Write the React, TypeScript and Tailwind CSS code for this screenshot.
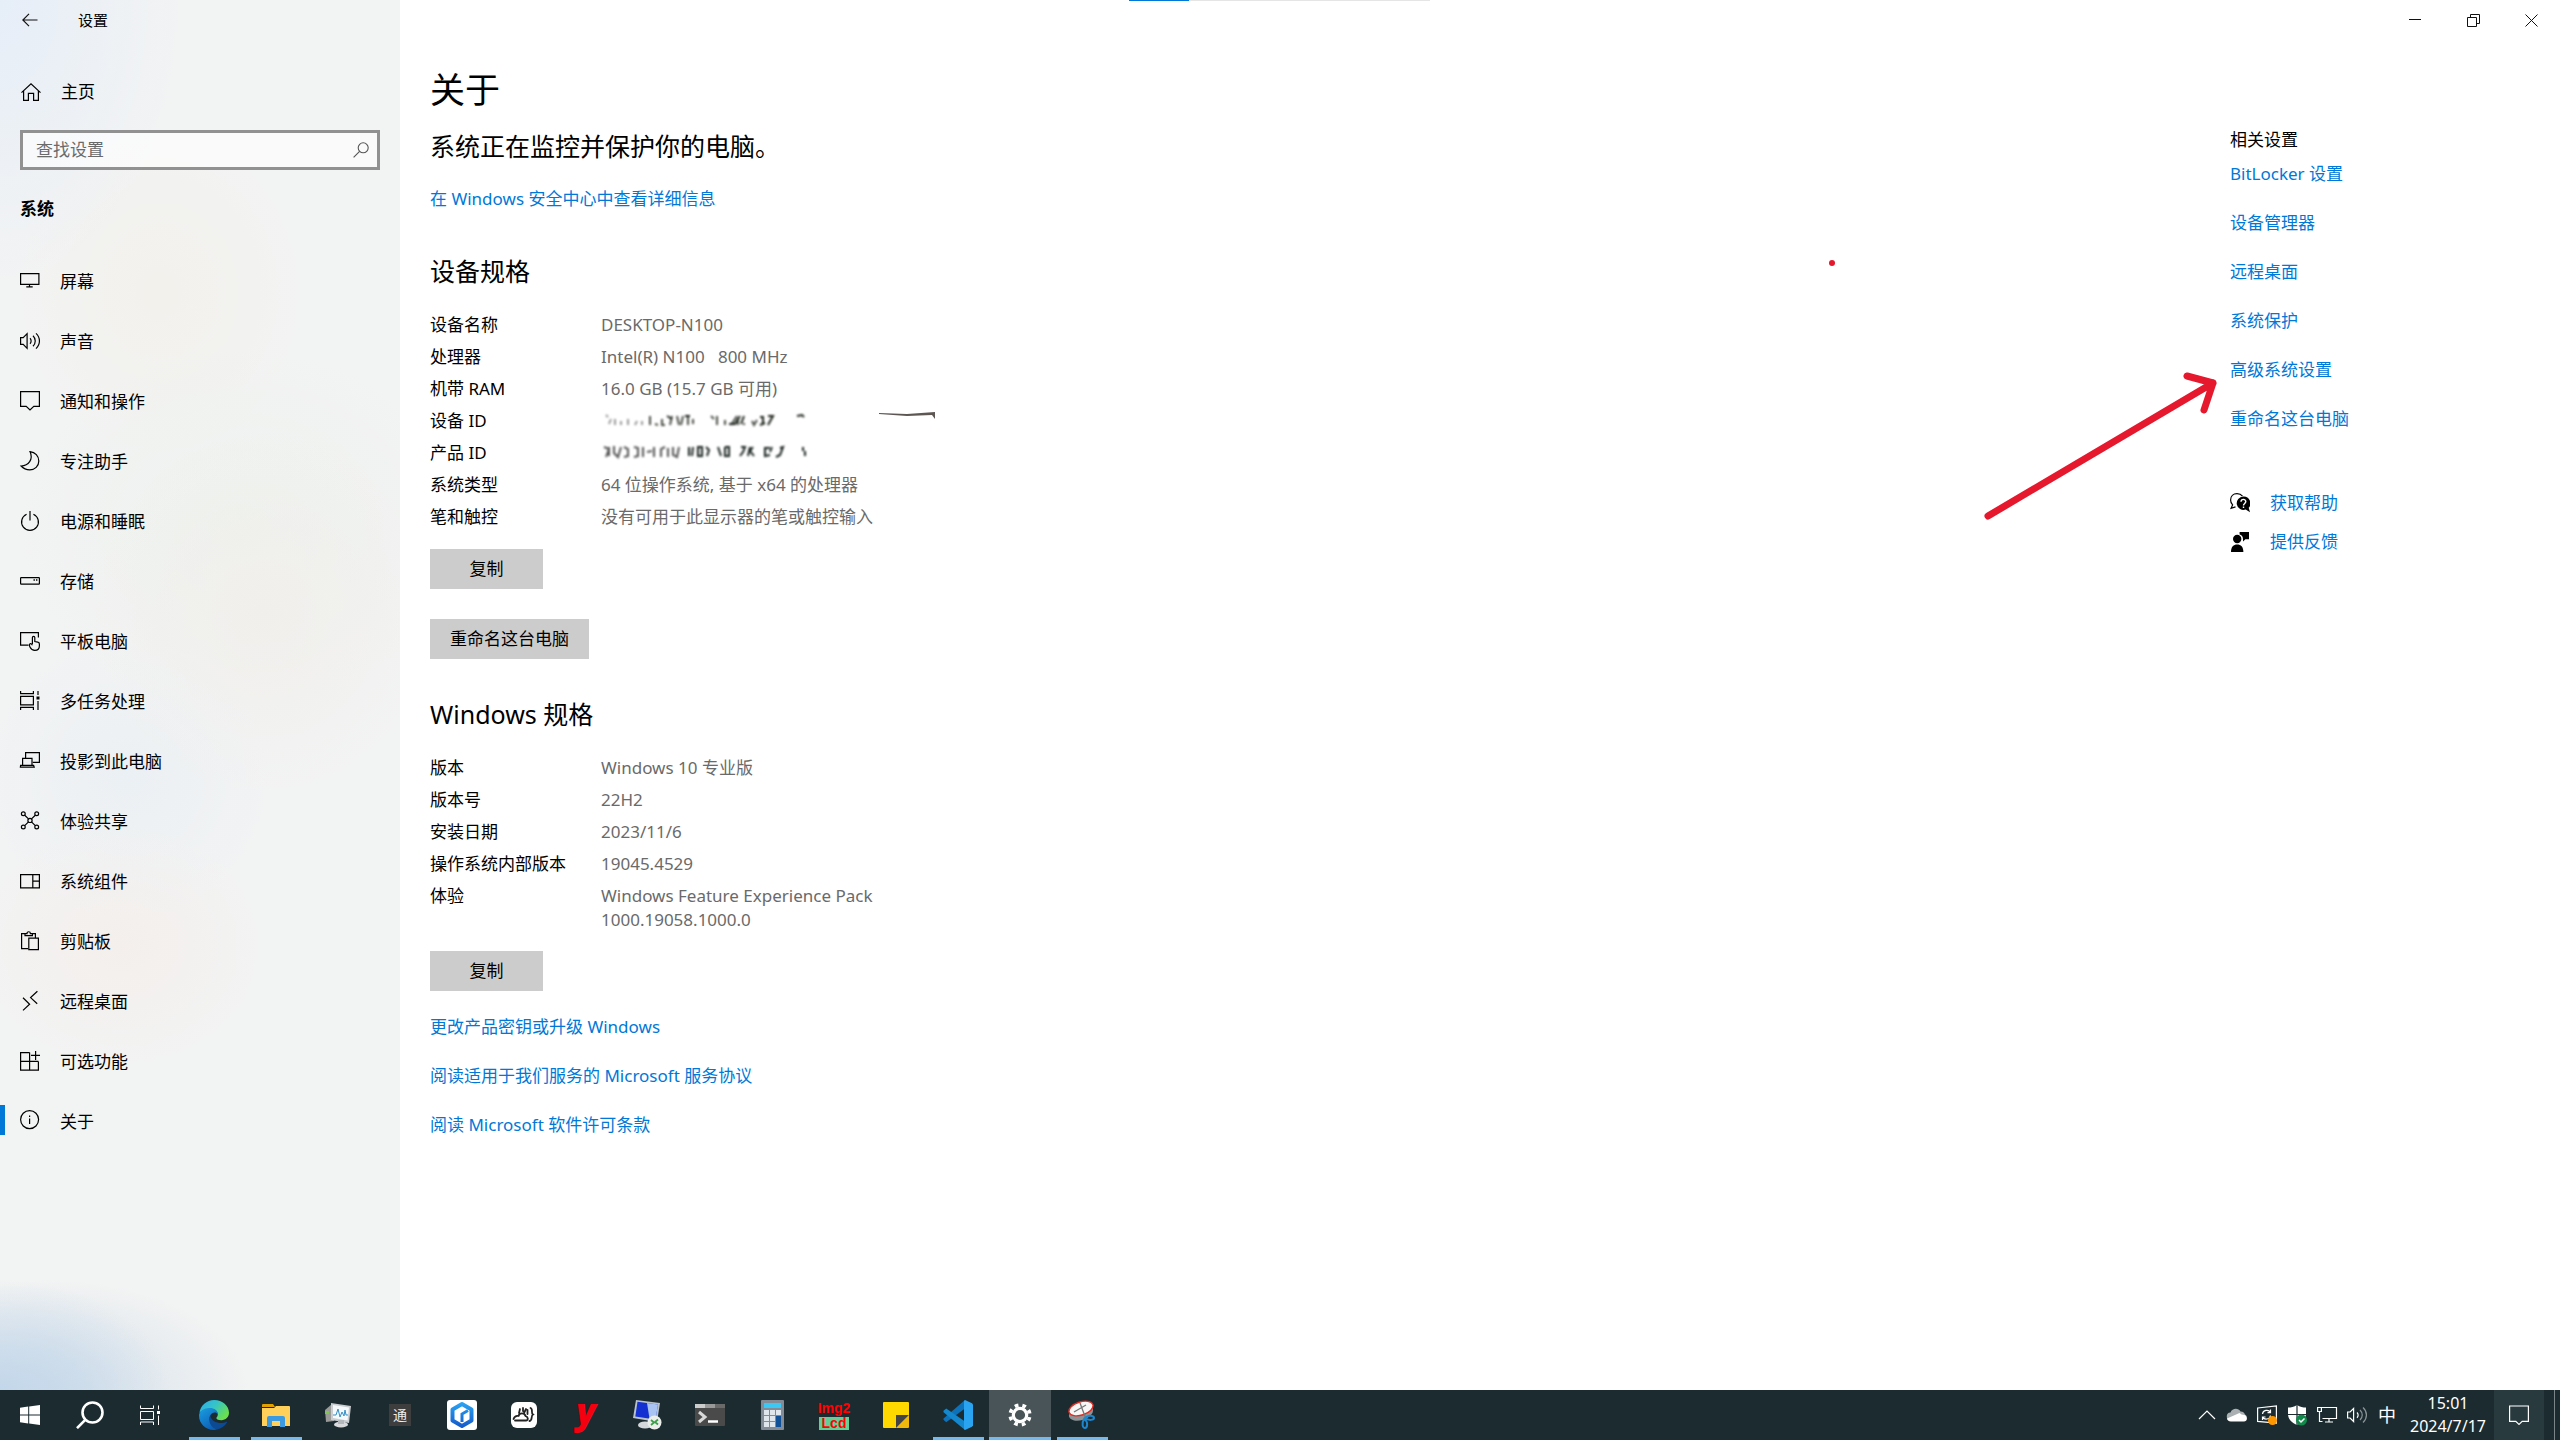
import type { ReactNode } from "react";

type IconProps = { children: ReactNode; className?: string };

function LineIcon({ children, className = "" }: IconProps) {
  return (
    <svg
      viewBox="0 0 20 20"
      fill="none"
      stroke="currentColor"
      strokeWidth="1.2"
      aria-hidden="true"
      className={`size-5 shrink-0 overflow-visible ${className}`}
    >
      {children}
    </svg>
  );
}

const navItems: { label: string; icon: ReactNode; current?: boolean }[] = [
  {
    label: "屏幕",
    icon: <path d="M.6 3.6h18.3v10.8H.6zM9.5 14.4v2.2M6.3 16.8h6.4" />,
  },
  {
    label: "声音",
    icon: (
      <path d="M.6 7.6h2.6l3.9-3.9v14.6l-3.9-3.9H.6zM10 8.2c1.5 1.4 1.5 4.2 0 5.6M13 5.8c3 2.9 3 7.5 0 10.4M16 3.4c4.6 4.3 4.6 11 0 15.2" />
    ),
  },
  {
    label: "通知和操作",
    icon: <path d="M.6 1.6h18.8v14.8h-5.6L10 20l-3.8-3.6H.6z" />,
  },
  {
    label: "专注助手",
    icon: (
      <path d="M10 1.6c5.2 .6 8.8 4.5 8.8 9.4 0 5.2-4 8.9-9 8.9-3.4 0-6.3-1.2-8.700-3.9C8.500 15.800 13.600 9.500 10 1.600z" />
    ),
  },
  {
    label: "电源和睡眠",
    icon: <path d="M10 1v9.500M6.600 4.200a8.400 8.400 0 1 0 6.800 0" />,
  },
  {
    label: "存储",
    icon: (
      <>
        <rect x=".6" y="7.600" width="18.800" height="6.600" rx=".6" />
        <path d="M13.500 10h1.400M16 10h1.400" strokeWidth="1.400" />
      </>
    ),
  },
  {
    label: "平板电脑",
    icon: (
      <>
        <path d="M18.400 7.500V2.600H.6v12.600h8" />
        <path d="M12.400 14V7.600c0-1.700 2.400-1.700 2.400 0v4l3 .6c1.100.2 1.600.8 1.600 1.800v1.700c0 2.900-2 4.700-4.600 4.700-2.400 0-3.700-1-4.700-3.100-.7-1.500-1.200-3.400.3-3.700 1-.2 1.500.8 2 1.600" />
      </>
    ),
  },
  {
    label: "多任务处理",
    icon: (
      <>
        <path d="M.6 1v2.600h12.800V1M.6 6.400h12.800v8.400H.6zM.6 20v-2.600h12.800V20M18 1v4M18 11v9" />
        <path d="M16.500 6.500h3v3h-3z" fill="currentColor" stroke="none" />
      </>
    ),
  },
  {
    label: "投影到此电脑",
    icon: (
      <path d="M5.600 8V2.600h13.800v9.800h-6.500M2.600 8.400h9.400v7H2.600zM.6 15.400h13l.6 1.800H.4z" />
    ),
  },
  {
    label: "体验共享",
    icon: (
      <>
        <circle cx="3.300" cy="3.800" r="1.900" />
        <circle cx="16.700" cy="3.800" r="1.900" />
        <circle cx="3.300" cy="17" r="1.900" />
        <circle cx="16.700" cy="17" r="1.900" />
        <circle cx="10" cy="10.400" r="2.100" />
        <path d="M4.700 5.200l3.800 3.700M15.300 5.200l-3.800 3.700M4.700 15.600l3.800-3.700M15.300 15.600l-3.800-3.700" />
      </>
    ),
  },
  {
    label: "系统组件",
    icon: <path d="M.6 4.600h18.800v13.200H.6zM12.800 4.600v13.200M12.800 11.200h6.600" />,
  },
  {
    label: "剪贴板",
    icon: (
      <path d="M8 18.600H1.600v-15H5M11.600 3.600h3.800v4M5 5.600v-2h2c0-2.500 3.400-2.500 3.400 0h2v2zM8.800 8.200h9.600v11.400H8.800z" />
    ),
  },
  {
    label: "远程桌面",
    icon: <path d="M17.400 1.200l-6.800 6.400 6.600 6.200M3 7.800l6.600 6.400L3 20.400" />,
  },
  {
    label: "可选功能",
    icon: (
      <path d="M9.600 2.600h-9v17.600h17.800v-8.800M.6 11.400h17.800M9.600 2.600v17.600M15.600 1v9M11 5.400h9" />
    ),
  },
  {
    label: "关于",
    current: true,
    icon: (
      <>
        <circle cx="9.600" cy="9.600" r="9" />
        <path d="M9.600 8.600v5.400M9.600 5.400v1.700" />
      </>
    ),
  },
];

function Smudge({ kind }: { kind: "device" | "product" }) {
  if (kind === "device") {
    return (
      <svg viewBox="0 -3 340 24" className="h-6 w-[340px]" role="img" aria-label="已隐藏的设备 ID">
        <g fill="none" strokeWidth="2" className="blur-[1px]">
          <path stroke="#999" d="M5 3l2 2M8 12l2-5M14 13v-6M20 13v-4M27 13v-6M34 13l2-4M41 13V9" />
          <path stroke="#4b4f48" d="M49 4v9M54 12l3 1M61 7v6h3M71 4l-2 9M76 4l2 9M82 4l-2 9M87 5v8M92 12V7M110 4l3 3M116 4v9M124 13v-5M130 13l6-9M137 13V6M143 13v-2M151 9l2 4 3-5" />
          <path stroke="#1f251d" d="M66 4l5 3M84 4l5 0M128 12h7M134 12l5-8M140 12l3-8M159 5l3 0v6M167 4h5l-5 9M159 13l5-2M196 4l5-1 2 2" />
        </g>
        <path d="M278 1l28 1 28-2v7l-3-4-25 1-28-2z" fill="#5d5653" />
      </svg>
    );
  }
  return (
    <svg viewBox="0 -3 340 24" className="h-6 w-[340px]" role="img" aria-label="已隐藏的产品 ID">
      <g fill="none" strokeWidth="2" className="blur-[1px]">
        <path stroke="#555" d="M3 3l5 2-3 8M8 3v9M13 2v7l4 4 3-10M23 3l4 2v7l-4 1M33 3l4 1v8l-4 1M42 3v10M46 8l5-1M53 3v10M60 13V5l4-2M67 13V4M72 3v8l4 2 2-10" />
        <path stroke="#1a2420" d="M88 3v9M92 3l-1 9M97 3v9h4V3h-5M105 3l3 3-2 6M117 3l3 9M124 3v9h4V3h-4M140 3h4l-2 5-3 4M149 3l-2 9M152 3l-3 4 4 5M164 3v9l5-1M164 4h5M171 3l-2 5M179 4l3-1-3 8-4 2M202 3v4M204 7v5" />
      </g>
    </svg>
  );
}

const deviceSpecs: [string, ReactNode][] = [
  ["设备名称", "DESKTOP-N100"],
  ["处理器", "Intel(R) N100\u00a0\u00a0 800 MHz"],
  ["机带 RAM", "16.0 GB (15.7 GB 可用)"],
  ["设备 ID", <Smudge kind="device" />],
  ["产品 ID", <Smudge kind="product" />],
  ["系统类型", "64 位操作系统, 基于 x64 的处理器"],
  ["笔和触控", "没有可用于此显示器的笔或触控输入"],
];

const windowsSpecs: [string, ReactNode][] = [
  ["版本", "Windows 10 专业版"],
  ["版本号", "22H2"],
  ["安装日期", "2023/11/6"],
  ["操作系统内部版本", "19045.4529"],
  [
    "体验",
    <>
      Windows Feature Experience Pack
      <br />
      1000.19058.1000.0
    </>,
  ],
];

function SpecTable({ rows, label }: { rows: [string, ReactNode][]; label: string }) {
  return (
    <table aria-label={label} className="mt-[22px] border-collapse text-left">
      <tbody>
        {rows.map(([name, value]) => (
          <tr key={name} className="align-top">
            <th scope="row" className="w-[171px] py-1 font-normal whitespace-nowrap">
              {name}
            </th>
            <td className="py-1 whitespace-nowrap text-[#6a6a6a]">{value}</td>
          </tr>
        ))}
      </tbody>
    </table>
  );
}

function Link({ children }: { children: ReactNode }) {
  return (
    <a href="#" className="block w-fit text-[#0078d7] hover:text-gray-500">
      {children}
    </a>
  );
}

function PushButton({ children, className = "" }: { children: ReactNode; className?: string }) {
  return (
    <button type="button" className={`block h-10 min-w-[113px] bg-[#ccc] px-5 ${className}`}>
      {children}
    </button>
  );
}

function Sidebar() {
  return (
    <aside className="w-[400px] shrink-0 bg-[#f2f3f3] bg-[radial-gradient(ellipse_170px_110px_at_0%_100%,#c3d7ea_0%,transparent_100%),radial-gradient(ellipse_200px_110px_at_12%_100%,#d3dfea_0%,transparent_100%),radial-gradient(ellipse_180px_280px_at_0%_0%,#e6eef8_0%,transparent_100%),radial-gradient(ellipse_170px_180px_at_66%_44%,#f1efec_0%,transparent_100%),radial-gradient(ellipse_220px_180px_at_60%_38%,#edf2ed_0%,transparent_100%),radial-gradient(ellipse_140px_120px_at_30%_68%,#f4efec_0%,transparent_100%),radial-gradient(ellipse_140px_140px_at_32%_56%,#ebf0f4_0%,transparent_100%),radial-gradient(ellipse_140px_160px_at_40%_21%,#f2f1ec_0%,transparent_100%)]">
      <div className="flex h-10 items-center">
        <button type="button" aria-label="返回" className="flex h-10 w-[60px] items-center justify-center">
          <svg viewBox="0 0 16 16" className="size-4" fill="none" stroke="#111" strokeWidth="1.200" aria-hidden="true">
            <path d="M15.500 8H1M7 1.800L.8 8 7 14.200" />
          </svg>
        </button>
        <span className="pl-[18px] text-[15px]">设置</span>
      </div>

      <a href="#" className="mt-[27px] flex h-[50px] items-center gap-[21px] pl-5">
        <LineIcon>
          <path d="M1.500 10.600L11 1.800l9.500 8.800M3.600 9v9.400h4.800v-7h5.200v7h4.800V9" />
        </LineIcon>
        主页
      </a>

      <div className="mx-5 mt-[13px] flex h-10 items-center border-[3px] border-[#919191] bg-white/60 pr-2 pl-[13px]">
        <input
          type="search"
          aria-label="查找设置"
          placeholder="查找设置"
          className="min-w-0 flex-1 bg-transparent outline-none placeholder:text-[#6a6a6a]"
        />
        <svg viewBox="0 0 16 16" className="size-4" fill="none" stroke="#555" strokeWidth="1.100" aria-hidden="true">
          <circle cx="10.200" cy="5.800" r="5" />
          <path d="M6.600 9.400L.6 15.400" />
        </svg>
      </div>

      <h2 className="mt-[27px] pl-5 leading-6 font-bold">系统</h2>

      <nav aria-label="系统" className="mt-[29px]">
        {navItems.map((item) => (
          <a
            key={item.label}
            href="#"
            aria-current={item.current ? "page" : undefined}
            className="relative flex h-[60px] items-center gap-5 pl-5 hover:bg-black/5"
          >
            {item.current && <span className="absolute left-0 h-[30px] w-[5px] bg-[#0078d7]" />}
            <LineIcon>{item.icon}</LineIcon>
            <span className="pt-[3px]">{item.label}</span>
          </a>
        ))}
      </nav>
    </aside>
  );
}

function WindowControls() {
  return (
    <header className="relative flex h-10 justify-end">
      <div className="absolute top-0 left-[729px] flex h-px w-[301px] bg-[#e5e5e5]">
        <span className="w-[60px] bg-[#0078d7]" />
      </div>
      <button type="button" aria-label="最小化" className="flex w-[58px] items-center justify-center">
        <svg viewBox="0 0 12 12" className="size-3" stroke="#111" fill="none" aria-hidden="true">
          <path d="M0 5.500h12" />
        </svg>
      </button>
      <button type="button" aria-label="还原" className="flex w-[58px] items-center justify-center">
        <svg viewBox="0 0 13 13" className="size-[13px]" stroke="#111" fill="none" aria-hidden="true">
          <path d="M.5 3.500h9v9h-9zM3.500 3.500v-3h9v9h-3" />
        </svg>
      </button>
      <button type="button" aria-label="关闭" className="flex w-[58px] items-center justify-center">
        <svg viewBox="0 0 13 13" className="size-[13px]" stroke="#111" fill="none" aria-hidden="true">
          <path d="M.5.5l12 12M12.500.5l-12 12" />
        </svg>
      </button>
    </header>
  );
}

function Related() {
  return (
    <aside className="relative w-[330px] shrink-0 pt-[88px]">
      <svg
        viewBox="0 0 390 264"
        className="pointer-events-none absolute top-[216px] left-[-402px] h-[264px] w-[390px]"
        fill="none"
        stroke="#e5182d"
        strokeWidth="7"
        strokeLinecap="round"
        strokeLinejoin="round"
        aria-hidden="true"
      >
        <circle cx="4" cy="7" r="3" fill="#e5182d" stroke="none" />
        <path d="M160 260L385 127M359 120l26 7-9 27" />
      </svg>
      <h2 className="leading-6">相关设置</h2>
      <div className="mt-[10px] flex flex-col gap-[25px]">
        <Link>BitLocker 设置</Link>
        <Link>设备管理器</Link>
        <Link>远程桌面</Link>
        <Link>系统保护</Link>
        <Link>高级系统设置</Link>
        <Link>重命名这台电脑</Link>
      </div>
      <div className="mt-[60px] flex flex-col gap-[15px]">
        <div className="flex items-center gap-5">
          <svg viewBox="0 0 20 20" className="size-5" aria-hidden="true">
            <path
              d="M12.500 3.200C11.200 1.600 9.300.7 7 .7 3.300.7.600 3.200.600 7c0 2 .7 3.600 2 4.900L1 15.400l4.500-1.500"
              fill="none"
              stroke="#000"
              strokeWidth="1.200"
            />
            <path d="M13.300 3.600a6.700 6.700 0 1 0 2.400 13l4.300 2.600-1.300-4.400a6.700 6.700 0 0 0-5.400-11.200z" />
            <path
              d="M11 8.800c0-3.200 4.800-3.200 4.800-.2 0 1.800-2.300 1.900-2.300 3.800M13.500 13.600v1.400"
              fill="none"
              stroke="#fff"
              strokeWidth="1.400"
            />
          </svg>
          <Link>获取帮助</Link>
        </div>
        <div className="flex items-center gap-5">
          <svg viewBox="0 0 20 20" className="size-5" aria-hidden="true">
            <circle cx="7.200" cy="7" r="4.200" />
            <path d="M1 20c0-5 2.500-7.400 6.200-7.400s6.200 2.400 6.200 7.400zM9.600 0H19v7.200h-3.600L13 9.400V7.200c0-2.600-1.400-4-3.400-4.600z" />
          </svg>
          <Link>提供反馈</Link>
        </div>
      </div>
    </aside>
  );
}

type TaskbarApp = { name: string; icon: ReactNode; state?: "open" | "active" };

const apps: TaskbarApp[] = [
  {
    name: "Microsoft Edge",
    state: "open",
    icon: (
      <svg viewBox="0 0 30 30" className="size-[30px]">
        <defs>
          <linearGradient id="edgeTop" x1="0" y1="0" x2="1" y2=".6">
            <stop offset="0" stopColor="#2fa9e8" />
            <stop offset=".5" stopColor="#35c4c8" />
            <stop offset="1" stopColor="#6be04b" />
          </linearGradient>
          <linearGradient id="edgeLeft" x1="0" y1="0" x2=".6" y2="1">
            <stop offset="0" stopColor="#1a9fe2" />
            <stop offset="1" stopColor="#0d5fb6" />
          </linearGradient>
        </defs>
        <path d="M.4 13C1.500 5.500 7.500 0 15.200 0 23.500 0 30 5.800 30 12.800c0 4.400-3.400 7.400-7.600 7.400-3.600 0-5.200-1.200-5-2.200.2-.8 1.400-1.300 1.400-3.700 0-3-3.400-5.600-7.600-5.600-5 0-9 2-10.800 4.300z" fill="url(#edgeTop)" />
        <path d="M0 15.500C0 11.500 5 8 10.800 8c4.600 0 8 2.600 8 6-1.400-2.400-6-2.200-7.600 1.400-2 4.600 1 10.800 6.800 13.800-1 .5-2 .8-3.200.8C6.500 30 0 23.500 0 15.500z" fill="url(#edgeLeft)" />
        <path d="M11.200 15.400C8.500 21 12 28 18.200 29.500c4-.8 7.600-3.200 9.800-6.900.3-.6-.3-.9-.8-.7-5.600 2.400-14.800.6-16-6.500z" fill="#0c4a94" />
      </svg>
    ),
  },
  {
    name: "文件资源管理器",
    state: "open",
    icon: (
      <svg viewBox="0 0 28 24" className="h-6 w-7">
        <path d="M0 2a1 1 0 0 1 1-1h10l2 3H0z" fill="#e3a100" />
        <path d="M0 5h12l2-2h13a1 1 0 0 1 1 1v19H0z" fill="#ffd05a" />
        <path d="M5 24V15a2 2 0 0 1 2-2h14a2 2 0 0 1 2 2v9h-5v-6h-8v6z" fill="#3c9ae0" />
      </svg>
    ),
  },
  {
    name: "性能监视器",
    icon: (
      <svg viewBox="0 0 28 26" className="h-[26px] w-7">
        <path d="M1 8l7-6 2 17-8 1z" fill="#9a9a98" />
        <path d="M1 9h4v3H1z" fill="#7ec850" />
        <path d="M7 1l20 3-2 17-18-3z" fill="#c9cdd0" />
        <path d="M9 3l16 2.500-1.500 13L9 16z" fill="#f5f9fc" />
        <path d="M9 13h3l2-6 2 8 2-5 2 4 1-6 1 5h2" fill="none" stroke="#3390c8" />
        <ellipse cx="17" cy="22.500" rx="7" ry="3" fill="#d8dadb" />
        <path d="M14 18h6v4h-6z" fill="#b5b8ba" />
      </svg>
    ),
  },
  {
    name: "通",
    icon: (
      <span className="flex size-[22px] items-center justify-center bg-[#3e3e3e] text-[14px] leading-none text-[#eee]">
        通
      </span>
    ),
  },
  {
    name: "立方体",
    icon: (
      <svg viewBox="0 0 30 30" className="size-[30px]">
        <defs>
          <linearGradient id="cube" gradientUnits="userSpaceOnUse" x1="0" y1="2" x2="0" y2="28">
            <stop offset="0" stopColor="#2aa6f5" />
            <stop offset="1" stopColor="#1457c8" />
          </linearGradient>
        </defs>
        <rect width="30" height="30" rx="3" fill="#fff" />
        <path d="M15 4l9.500 5.500v11L15 26l-9.500-5.500v-11z" fill="none" stroke="url(#cube)" strokeWidth="4" strokeLinejoin="round" />
        <path d="M15 22v-8l6-3.500" fill="none" stroke="url(#cube)" strokeWidth="3" />
      </svg>
    ),
  },
  {
    name: "云应用",
    icon: (
      <svg viewBox="0 0 26 26" className="size-[26px]">
        <rect width="26" height="26" rx="6" fill="#fff" />
        <path
          d="M2.500 17c1-2.500 3-3.500 5-3 1-3.500 6-3.500 7 0M4 18.500h11c2.500 0 2.500-3.500-.5-4.500M9 7l-1 4M12 6v3M15 7l-2 4M16.500 8v4M19.500 6c3 1 0 5 2.500 6.500-2.500 1.500 0 6-3.500 6.500"
          fill="none"
          stroke="#222"
          strokeWidth="1.800"
          strokeLinecap="round"
        />
      </svg>
    ),
  },
  {
    name: "有道词典",
    icon: (
      <span className="pb-2 font-['Open_Sans',sans-serif] text-[36px] leading-none font-extrabold text-[#f5000f] italic">y</span>
    ),
  },
  {
    name: "远程桌面连接",
    icon: (
      <svg viewBox="0 0 30 30" className="size-[30px]">
        <path d="M3 0l24 3-3 19L0 18z" fill="#b9c2ca" />
        <path d="M4.500 1.800l20.500 2.600-2.500 15L2.300 16.400z" fill="#1430d0" />
        <path d="M14 3l11 1.400-2.500 15-6-1z" fill="#a9c4f2" />
        <ellipse cx="12" cy="25" rx="7" ry="3.600" fill="#d5d8da" />
        <circle cx="21.500" cy="22.500" r="7" fill="#eceeec" />
        <path d="M18 20l3 2.500-3 2.500M25 19.500L22 22l3 2.500" fill="none" stroke="#3ba048" strokeWidth="1.800" />
      </svg>
    ),
  },
  {
    name: "命令提示符",
    icon: (
      <svg viewBox="0 0 30 22" className="h-[22px] w-[30px]">
        <rect width="30" height="22" rx="1" fill="#4a4a4a" />
        <path d="M0 0h10v4H0z" fill="#ccc" />
        <path d="M10 0h10v4H10z" fill="#999" />
        <path d="M20 0h10v4H20z" fill="#6a6a6a" />
        <path d="M4 8l6 5-6 5" fill="none" stroke="#d8d8d8" strokeWidth="3" />
        <path d="M13 17.500h10" stroke="#fff" strokeWidth="2.500" />
      </svg>
    ),
  },
  {
    name: "计算器",
    icon: (
      <svg viewBox="0 0 23 30" className="h-[30px] w-[23px]">
        <rect width="23" height="30" rx="1" fill="#838c96" />
        <path d="M3 3h17v5H3z" fill="#3cc8f4" />
        <path d="M3 10h5v5H3zM9 10h5v5H9zM15 10h5v5h-5zM3 16h5v5H3zM9 16h5v5H9zM3 22h5v5H3zM9 22h5v5H9z" fill="#dfe6ec" />
        <path d="M15 16h5v11h-5z" fill="#0f5096" />
      </svg>
    ),
  },
  {
    name: "Img2Lcd",
    icon: (
      <span className="flex w-[30px] flex-col items-center font-['Liberation_Sans',sans-serif] text-[14px] leading-[17px] font-bold text-[#f00]">
        <span>Img2</span>
        <span className="h-[13px] w-full bg-[#63cf97] text-center leading-[13px]">Lcd</span>
      </span>
    ),
  },
  {
    name: "便笺",
    icon: (
      <svg viewBox="0 0 26 26" className="size-[26px]">
        <path d="M1 0h24a1 1 0 0 1 1 1v12L13 26H1a1 1 0 0 1-1-1V1a1 1 0 0 1 1-1z" fill="#ffd800" />
        <path d="M13 26V13h13z" fill="#444" />
        <path d="M26 13v12a1 1 0 0 1-1 1H13z" fill="#f0b90c" />
      </svg>
    ),
  },
  {
    name: "Visual Studio Code",
    state: "open",
    icon: (
      <svg viewBox="0 0 30 30" className="size-[30px]">
        <path d="M22 0v8.500L3.200 22.200.500 19.800V18.600z" fill="#0d72b9" />
        <path d="M.5 10.800L3.200 8.400 22 21.500V30L.5 12.200z" fill="#1487cd" />
        <path d="M22 0l7 3.200 1 1.300v21l-1 1.300L22 30l-1-1V1z" fill="#2aa4f0" />
      </svg>
    ),
  },
  {
    name: "设置",
    state: "active",
    icon: (
      <svg viewBox="0 0 24 24" className="size-6" fill="none" stroke="#fff">
        <circle cx="12" cy="12" r="6.700" strokeWidth="3.200" />
        <circle cx="12" cy="12" r="9.800" strokeWidth="3.600" strokeDasharray="3.700 3.997" strokeDashoffset="-2.100" />
      </svg>
    ),
  },
  {
    name: "截图工具",
    state: "open",
    icon: (
      <svg viewBox="0 0 30 30" className="size-[30px]">
        <ellipse cx="14" cy="13" rx="12.500" ry="7" transform="rotate(-18 14 13)" fill="#8d9296" />
        <ellipse cx="14" cy="8.500" rx="12.500" ry="6.600" transform="rotate(-18 14 8.500)" fill="#f7f7f7" stroke="#e02a20" strokeWidth="1.400" />
        <path d="M13 3l6 16M7 12l12-7" stroke="#777" strokeWidth="1.300" />
        <path d="M18 18c4-4 9-2 9 0s-5 3-9 0zM17 19c5 3 3 9 1 9s-4-4-1-9z" fill="none" stroke="#1c86cf" strokeWidth="2" />
      </svg>
    ),
  },
];

function TrayButton({ label, children }: { label: string; children: ReactNode }) {
  return (
    <button type="button" aria-label={label} className="flex h-full w-[30px] items-center justify-center">
      <svg viewBox="0 0 20 20" className="size-5 overflow-visible" fill="none" stroke="#fff" strokeWidth="1.200" aria-hidden="true">
        {children}
      </svg>
    </button>
  );
}

function Taskbar() {
  return (
    <footer className="flex h-[50px] shrink-0 items-stretch bg-[#1b2b30] text-white">
      <button type="button" aria-label="开始" className="flex w-[60px] items-center justify-center">
        <svg viewBox="0 0 20 20" className="size-5" fill="#fff" aria-hidden="true">
          <path d="M0 2.800l8.200-1.200v8H0zM9.200 1.400L20 0v9.600H9.200zM0 10.500h8.200v8L0 17.300zM9.200 10.500H20V20L9.200 18.600z" />
        </svg>
      </button>
      <button type="button" aria-label="搜索" className="flex w-[60px] items-center justify-center">
        <svg viewBox="0 0 28 28" className="size-7" fill="none" stroke="#fff" strokeWidth="2.600" aria-hidden="true">
          <circle cx="16.500" cy="11.500" r="10" />
          <path d="M9.500 18.700L1 27.200" />
        </svg>
      </button>
      <button type="button" aria-label="任务视图" className="flex w-[60px] items-center justify-center">
        <svg viewBox="0 0 20 20" className="size-5" fill="none" stroke="#fff" aria-hidden="true">
          <path d="M.5.500v3h13v-3M.5 6.500h13v8H.5zM.5 20v-3h13v3M18.500.500v4M18.500 10.500V20" />
          <path d="M17 6h3v3h-3z" fill="#fff" stroke="none" />
        </svg>
      </button>
      <div className="ml-[3px] flex">
        {apps.map((app) => (
          <button
            key={app.name}
            type="button"
            aria-label={app.name}
            className={`relative flex w-[62px] items-center justify-center ${app.state === "active" ? "bg-[#485457]" : ""}`}
          >
            {app.icon}
            {app.state && (
              <span className={`absolute bottom-0 h-[3px] bg-[#76b9ed] ${app.state === "active" ? "w-full" : "w-[51px]"}`} />
            )}
          </button>
        ))}
      </div>

      <div className="ml-auto flex items-center">
        <TrayButton label="显示隐藏的图标">
          <path d="M2 14l8-8 8 8" />
        </TrayButton>
        <TrayButton label="OneDrive">
          <path d="M4 15.500a4 4 0 0 1-.5-8C5 3 11.500 2.500 13.500 6.500c3 0 4 1.500 4.500 3 3 1.500 2 6-1 6z" fill="#aab0b2" stroke="none" />
          <path d="M4 16.500c-2.500 0-4-1.500-4-3L12.500 8c1.500 1 2.500 2 5 2 3.500 2 3 6.500-.5 6.500z" fill="#fff" stroke="none" />
        </TrayButton>
        <TrayButton label="Windows 更新">
          <path d="M.6 3L19.400.8v17.400L.6 16.400z" />
          <path d="M5.500 9c.5-4 6-5 8-1.500M13.500 4.500v3.200h-3M13.500 10.500c-.5 4-6 4.800-8 1.600M5.500 15v-3h3" />
          <circle cx="15.500" cy="15.500" r="4.500" fill="#ff9800" stroke="none" />
        </TrayButton>
        <TrayButton label="安全中心">
          <path d="M10 0c3 2 6 2.500 9 2.500v6.500c0 5-3.500 8.500-9 11-5.500-2.500-9-6-9-11V2.500C4 2.500 7 2 10 0z" fill="#fff" stroke="none" />
          <path d="M10 0v20M1 9.500h18" stroke="#1b2b30" />
          <circle cx="14.500" cy="15" r="5.500" fill="#10894a" stroke="none" />
          <path d="M12 15l2 2 3.500-3.500" strokeWidth="1.500" />
        </TrayButton>
        <TrayButton label="网络">
          <path d="M4.500 2.500h15v11h-14M12 13.500v3M8 17h8M.6 2.500h3.800v4H.6zM2.500 6.500v10h3" />
        </TrayButton>
        <TrayButton label="音量">
          <path d="M.6 7h2.500l3.500-3.500v13L3.100 13H.6zM10 7.500c1.500 1.400 1.500 3.800 0 5.200" />
          <path d="M13 5c3 2.900 3 7.200 0 10M16 2.500c4.600 4.300 4.600 10.700 0 15" stroke="#8b9497" />
        </TrayButton>
        <button type="button" aria-label="输入法" className="flex w-[30px] items-center justify-center text-[18px]">
          中
        </button>
        <button type="button" className="w-[92px] text-center text-[16px] leading-[23px]">
          15:01
          <br />
          2024/7/17
        </button>
        <button type="button" aria-label="通知" className="flex h-full w-[50px] items-center justify-center bg-[#293a3e]">
          <svg viewBox="0 0 20 20" className="size-5" fill="none" stroke="#fff" strokeWidth="1.200" aria-hidden="true">
            <path d="M.6 1h18.800v15.400h-6.200L10 19.400l-3.200-3H.6z" />
          </svg>
        </button>
        <button type="button" aria-label="显示桌面" className="ml-[10px] h-full w-[6px] border-l border-[#7a8588]" />
      </div>
    </footer>
  );
}

export default function App() {
  return (
    <div className="flex min-h-screen flex-col bg-white font-['Noto_Sans','Noto_Sans_CJK_SC',sans-serif] text-[17px] leading-6 text-black">
      <div className="flex flex-1">
        <Sidebar />
        <div className="flex min-w-0 flex-1 flex-col">
          <WindowControls />
          <div className="flex flex-1">
            <main className="flex-1 pt-7 pl-[30px]">
              <h1 className="text-[35px] leading-[44px]">关于</h1>
              <p className="mt-[18px] text-[25px] leading-8">系统正在监控并保护你的电脑。</p>
              <div className="mt-[25px]">
                <Link>在 Windows 安全中心中查看详细信息</Link>
              </div>

              <h2 className="mt-11 text-[25px] leading-8">设备规格</h2>
              <SpecTable label="设备规格" rows={deviceSpecs} />
              <PushButton className="mt-4">复制</PushButton>
              <PushButton className="mt-[30px]">重命名这台电脑</PushButton>

              <h2 className="mt-[39px] text-[25px] leading-8">Windows 规格</h2>
              <SpecTable label="Windows 规格" rows={windowsSpecs} />
              <PushButton className="mt-[15px]">复制</PushButton>
              <div className="mt-6 flex flex-col gap-[25px]">
                <Link>更改产品密钥或升级 Windows</Link>
                <Link>阅读适用于我们服务的 Microsoft 服务协议</Link>
                <Link>阅读 Microsoft 软件许可条款</Link>
              </div>
            </main>
            <Related />
          </div>
        </div>
      </div>
      <Taskbar />
    </div>
  );
}
